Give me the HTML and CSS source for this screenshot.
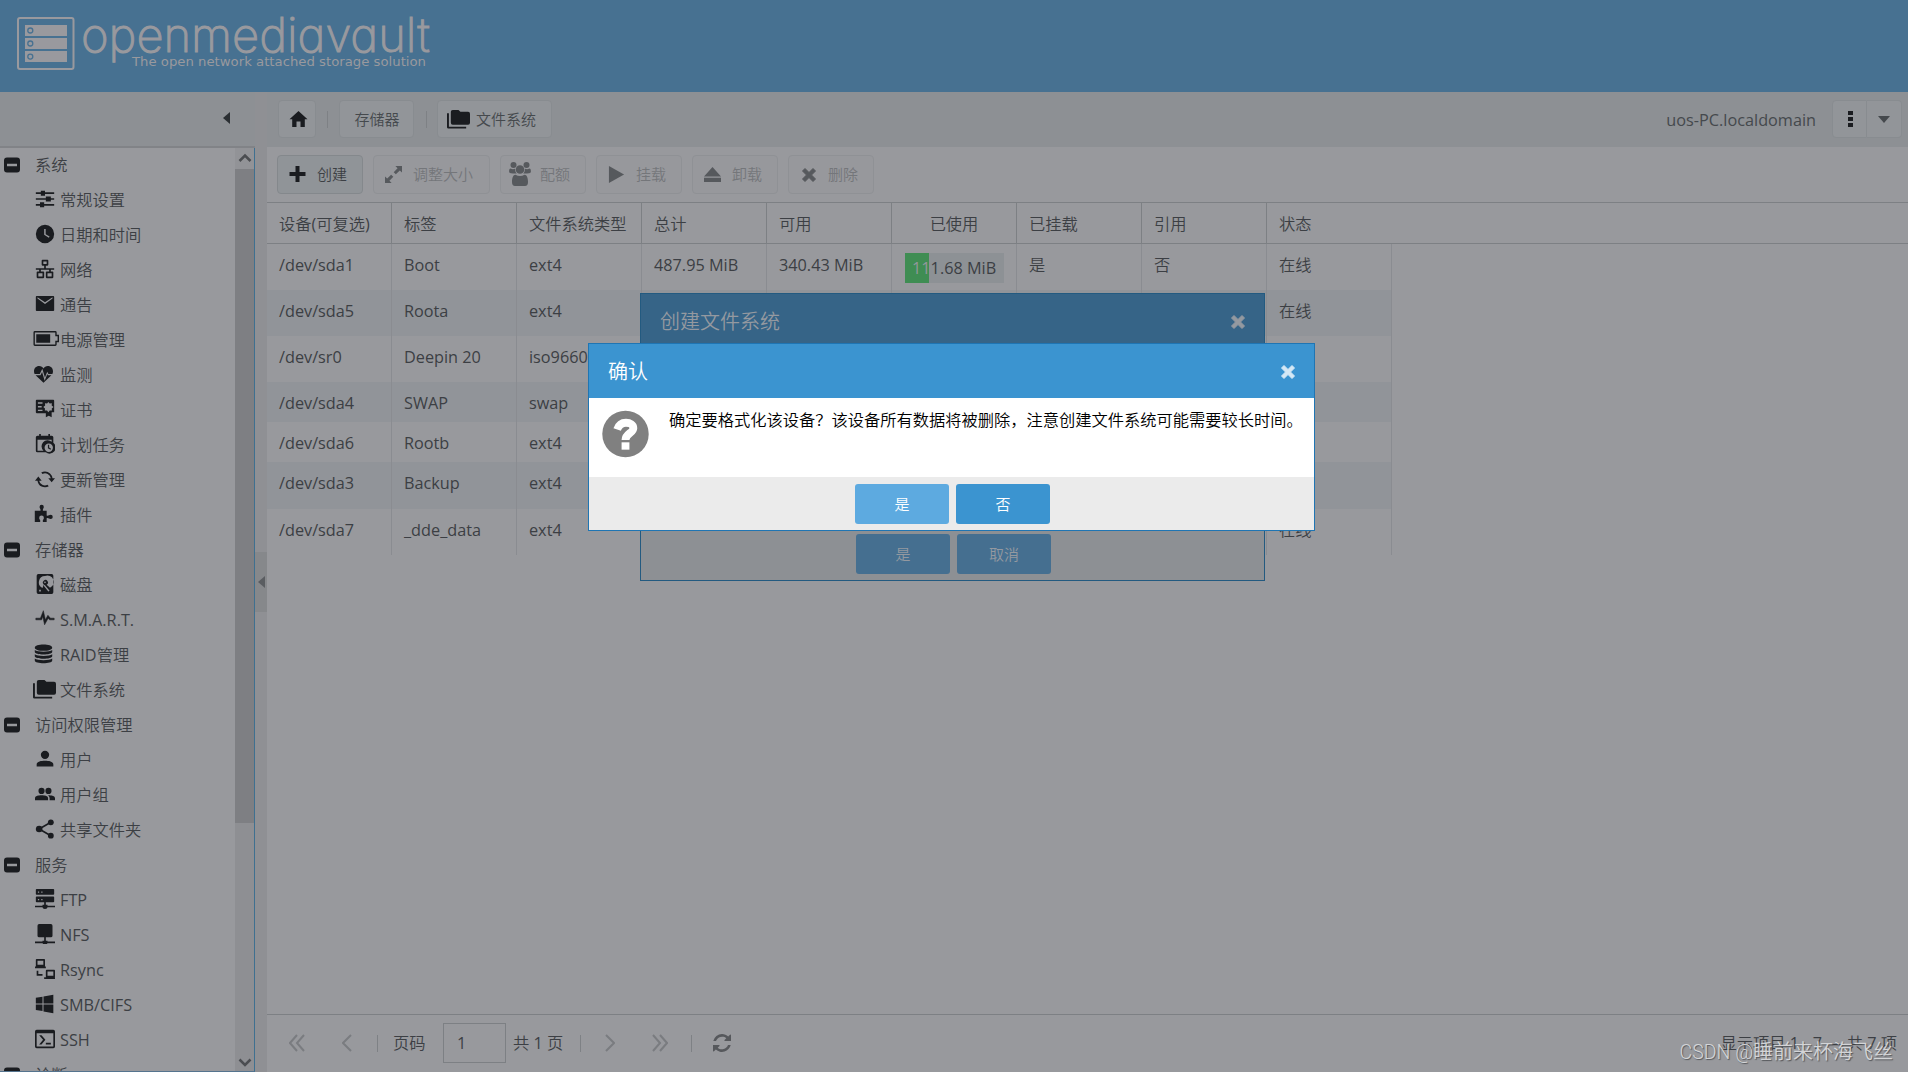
FILE: index.html
```html
<!DOCTYPE html>
<html lang="zh-CN">
<head>
<meta charset="utf-8">
<title>openmediavault</title>
<link rel="stylesheet" href="styles.css">
</head>
<body>
<svg class="defs" width="0" height="0">
  <symbol id="tune" viewBox="0 0 24 24"><path d="M1 4h6v2H1zm10 0h12v2H11zM7 2h5v6H7zM1 11h12v2H1zm17 0h5v2h-5zM13 9h6v6h-6zM1 18h5v2H1zm10 0h12v2H11zM6 16h5v6H6z"/></symbol>
  <symbol id="clock" viewBox="0 0 24 24"><path fill-rule="evenodd" d="M12 1a11 11 0 1 0 0 22 11 11 0 0 0 0-22zM11 6h1.800v6.200l4.700 2.800-.9 1.500L11 13z"/></symbol>
  <symbol id="lan" viewBox="0 0 24 24"><path fill-rule="evenodd" d="M9 1h6a1 1 0 0 1 1 1v5a1 1 0 0 1-1 1h-2v3h10v2h-4v2h2a1 1 0 0 1 1 1v6a1 1 0 0 1-1 1h-7a1 1 0 0 1-1-1v-6a1 1 0 0 1 1-1h3v-2H7v2h3a1 1 0 0 1 1 1v6a1 1 0 0 1-1 1H3a1 1 0 0 1-1-1v-6a1 1 0 0 1 1-1h2v-2H1v-2h10V8H9a1 1 0 0 1-1-1V2a1 1 0 0 1 1-1zm1 2v3h4V3zM4 17v4h5v-4zm11 0v4h5v-4z"/></symbol>
  <symbol id="mail" viewBox="0 0 24 24"><path fill-rule="evenodd" d="M2 2.500h20q1 0 1 1v16q0 1-1 1H2q-1 0-1-1v-16q0-1 1-1zM3 5.500l9 6.500 9-6.500V4l-9 6-9-6z"/></symbol>
  <symbol id="battery" viewBox="0 0 28 18"><path fill-rule="evenodd" d="M2 1h22q1.500 0 1.500 1.500V5H28v8h-2.500v2.500q0 1.500-1.500 1.500H2q-1.500 0-1.500-1.500v-13Q.500 1 2 1zm0 1.500v13h22v-4h2.500v-5H24v-4zM3.500 4.500h15v9h-15z"/></symbol>
  <symbol id="heart" viewBox="0 0 24 22"><path d="M6.500 1C9 1 11 2.300 12 4c1-1.700 3-3 5.500-3C21.500 1 24 4 24 7.500c0 1.200-.3 2.300-.8 3.500h-5L16.700 8l-2.900 7.500L10.500 4.500 7.300 11H.800A8 8 0 0 1 0 7.500C0 4 2.500 1 6.500 1zM2 12.500h6.200l2-4 3.300 11 3.300-8.500.7 1.500H22L12 22z"/></symbol>
  <symbol id="cert" viewBox="0 0 24 24"><path fill-rule="evenodd" d="M2 1h20q1 0 1 1v14h-3v6l-3.500-2-3.500 2v-5H2q-1 0-1-1V2q0-1 1-1zm1.500 3v1.800H9V4zm0 4.500v1.800H8V8.500zm0 4.500v1.500H9V13zM16 3.500l-1.500 2-2.500-.3.200 2.600L10 9.500l2 1.800-.2 2.500 2.600-.1L16 16l1.700-2.300 2.600.1-.2-2.500 2.100-1.800-2.200-1.700.2-2.600-2.600.3z"/></symbol>
  <symbol id="calendar" viewBox="0 0 24 24"><path fill-rule="evenodd" d="M5 0h2v2h9V0h2v2h2q2 0 2 2v6.500a7 7 0 1 1-9 11.500H3q-2 0-2-2V4q0-2 2-2h2zM3 7v13h7.200A7 7 0 0 1 20 9.300V7zm13.500 4.500a5 5 0 1 0 0 10 5 5 0 0 0 0-10zM15.500 13H17v3.200l2.300 1.500-.8 1.300-3-2z"/></symbol>
  <symbol id="renew" viewBox="0 0 24 24"><path d="M12 3a9 9 0 0 1 9 8h3l-4 5-4-5h3a7 7 0 0 0-10-5L7.500 4.200A9 9 0 0 1 12 3zM4 9l4 5H5a7 7 0 0 0 10 5l1.500 1.800A9 9 0 0 1 3 14H0z"/></symbol>
  <symbol id="puzzle" viewBox="0 0 24 24"><path d="M1 8h7c1-2-1-3-1-5a2.700 2.700 0 0 1 5.400 0c0 2-2 3-1 5H16v6c2 1 3-1 5-1a2.700 2.700 0 0 1 0 5.400c-2 0-3-2-5-1V22h-4.500c-1.500-2 1-3 1-5a3 3 0 0 0-6 0c0 2 2.500 3 1 5H1z"/></symbol>
  <symbol id="disk" viewBox="0 0 24 24"><path fill-rule="evenodd" d="M4 0h16q2 0 2 2v20q0 2-2 2H4q-2 0-2-2V2q0-2 2-2zm8 2.500a7.500 7.500 0 0 0-3 14.300l1.600-4.300a3 3 0 1 1 3.400.3l4 3.700A7.500 7.500 0 0 0 12 2.500zm0 6.500a1 1 0 1 0 0 2 1 1 0 0 0 0-2zm-.5 4l-1 1 5.500 7 1.500-1zM5 19v2h2v-2z"/></symbol>
  <symbol id="pulse" viewBox="0 0 24 24"><path d="M1 11h5.500L10 2l2.500 11 3-5.500 3 3.500H23v2h-5.500l-1.700-2-4.300 8L9.300 9 8 13H1z" stroke="currentColor" stroke-width=".6"/></symbol>
  <symbol id="database" viewBox="0 0 24 24"><path d="M12 0c6 0 11 1.500 11 4s-5 4-11 4S1 6.500 1 4s5-4 11-4zM1 7c3 2.800 19 2.800 22 0v2.500c0 4.200-22 4.200-22 0zm0 5.400c3 2.800 19 2.800 22 0v2.500c0 4.200-22 4.200-22 0zm0 5.400c3 2.800 19 2.800 22 0v2.500c0 4.600-22 4.600-22 0z"/></symbol>
  <symbol id="folders" viewBox="0 0 24 20"><path d="M6 .5h6l2 2h8q2 0 2 2V14q0 2-2 2H6q-2 0-2-2V2.500q0-2 2-2zM0 4h2v14h18v2H1.500Q0 20 0 18.500z"/></symbol>
  <symbol id="user" viewBox="0 0 24 24"><path d="M12 2a5 5 0 1 1 0 10 5 5 0 0 1 0-10zM2 21v-2.500C2 15 7 14 12 14s10 1 10 4.500V21z"/></symbol>
  <symbol id="users" viewBox="0 0 26 24"><path d="M8.500 4a4 4 0 1 1 0 8 4 4 0 0 1 0-8zm9 0a4 4 0 1 1 0 8 4 4 0 0 1 0-8zM0 20v-2.500C0 14.500 4 13.500 8.500 13.500s8.500 1 8.500 4V20zm19 0v-2.500c0-1.500-.7-2.800-2-3.900 5 0 9 1 9 3.900V20z"/></symbol>
  <symbol id="share" viewBox="0 0 24 24"><circle cx="5" cy="12" r="4"/><circle cx="19" cy="4" r="3.500"/><circle cx="19" cy="20" r="3.500"/><path d="M19 4L5 12l14 8" fill="none" stroke="currentColor" stroke-width="2"/></symbol>
  <symbol id="ftp" viewBox="0 0 24 24"><path fill-rule="evenodd" d="M2 0h20q1 0 1 1v5q0 1-1 1H2Q1 7 1 6V1q0-1 1-1zm0 9h20q1 0 1 1v5q0 1-1 1h-9v3h2v1h9v2h-9q0 2-3 2t-3-2H0v-2h9v-1h2v-3H2q-1 0-1-1v-5q0-1 1-1zM3.500 3v1.500H5V3zm4 0v1.500H9V3zm-4 9v1.500H5V12zm4 0v1.500H9V12z"/></symbol>
  <symbol id="nfs" viewBox="0 0 24 24"><path d="M5 0h14q2 0 2 2v12q0 2-2 2h-6v4h2v1h9v2h-9q0 1-3 1t-3-1H0v-2h9v-1h2v-4H5q-2 0-2-2V2q0-2 2-2z"/></symbol>
  <symbol id="rsync" viewBox="0 0 24 24"><path fill-rule="evenodd" d="M2 0h9q1 0 1 1v7q0 1-.5 1H13v2H0V9h1.500Q1 9 1 8V1q0-1 1-1zm1 2v5h7V2zM2 14h2v4h5v2H2zm12-1h9q1 0 1 1v7q0 1-.5 1h.5v2H11v-2h2.500q-.5 0-.5-1v-7q0-1 1-1zm1 2v5h7v-5z"/></symbol>
  <symbol id="windows" viewBox="0 0 24 24"><path d="M1 4.500l8-1.200v8H1zM10.200 3L22 1v10.300H10.200zM1 12.500h8v8l-8-1.200zm9.200 0H22V23l-11.800-2z"/></symbol>
  <symbol id="ssh" viewBox="0 0 24 24"><path fill-rule="evenodd" d="M2 1h20q2 0 2 2v18q0 2-2 2H2q-2 0-2-2V3q0-2 2-2zm0 4v16h20V5zm3 2.500h2.800L12.500 13l-4.700 5.500H5L9.700 13zM13 16.500h6v2h-6z"/></symbol>
  <symbol id="minus" viewBox="0 0 16 16"><path fill-rule="evenodd" d="M3 .5h10q3 0 3 3v9q0 3-3 3H3q-3 0-3-3v-9q0-3 3-3zM3 6.700v2.600h10V6.700z"/></symbol>
  <symbol id="home" viewBox="0 0 18 16"><path d="M9 0l9 8.300h-2.700V16h-4.300v-5.500H7V16H2.700V8.300H0z"/></symbol>
  <symbol id="plus" viewBox="0 0 16 16"><path d="M6 0h4v6h6v4h-6v6H6v-6H0V6h6z"/></symbol>
  <symbol id="expand" viewBox="0 0 18 18"><path d="M11 0h7v7l-2.300-2.300-4.200 4.100-2.300-2.300 4.100-4.200zM6.500 9.200l2.300 2.300-4.100 4.200L7 18H0v-7l2.300 2.300z"/></symbol>
  <symbol id="group" viewBox="0 0 22 24"><circle cx="4.500" cy="3" r="3"/><circle cx="17.500" cy="3" r="3"/><circle cx="11" cy="7.500" r="4.300"/><path d="M1.500 6.500c2 1 3 .7 4.500.3.200 2.500.7 3.700 1.800 4.700H4C1 11.500 0 10.500.1 9.500c0-2 .5-3 1.400-3zm19 0c-2 1-3 .7-4.500.3-.2 2.500-.7 3.700-1.800 4.700H18c3 0 4-1 3.900-2 0-2-.5-3-1.400-3zM6.500 12.700c2.800 1.600 6.200 1.600 9 0 2.500 0 3.500 3.300 3.500 7.300q0 4-3 4H6q-3 0-3-4c0-4 1-7.300 3.500-7.300z"/></symbol>
  <symbol id="play" viewBox="0 0 16 18"><path d="M0 0l16 9-16 9z"/></symbol>
  <symbol id="eject" viewBox="0 0 18 16"><path d="M9 0l9 10H0zM0 11.500h18V16H0z"/></symbol>
  <symbol id="cross" viewBox="0 0 14 14"><path d="M3 .5L7 4.500l4-4L13.500 3l-4 4 4 4-2.500 2.500-4-4-4 4L.5 11l4-4-4-4z" stroke="currentColor" stroke-linejoin="round"/></symbol>
  <symbol id="refresh" viewBox="0 0 18 18"><path d="M9 0c2.400 0 4.600 1 6.200 2.500L17 .7q1-.5 1 .500V7h-6q-1 0-.5-1l1.800-1.700A6.400 6.400 0 0 0 3 7H.300A9 9 0 0 1 9 0zM0 11h6q1 0 .5 1l-1.800 1.700A6.400 6.400 0 0 0 15 11h2.700A9 9 0 0 1 2.800 15.500L1 17.300q-1 .5-1-.5z"/></symbol>
</svg>

<div class="app">
  <header class="banner">
    <svg class="logo" width="440" height="92" viewBox="0 0 440 92">
      <rect x="18" y="18" width="55.500" height="51" rx="2" fill="none" stroke="currentColor" stroke-width="2"/>
      <path d="M25 25h42v11H25zM25 38h42v11H25zM25 51h42v11H25z" fill="currentColor"/>
      <g class="leds"><circle cx="30.300" cy="30.500" r="2.500"/><circle cx="30.300" cy="43.500" r="2.500"/><circle cx="30.300" cy="56.600" r="2.500"/></g>
      <text class="brand" x="81" y="52" textLength="349" lengthAdjust="spacingAndGlyphs">openmediavault</text>
      <text class="tagline" x="132" y="66" textLength="294" lengthAdjust="spacingAndGlyphs">The open network attached storage solution</text>
    </svg>
  </header>

  <div class="workspace">
    <aside class="sidebar">
      <div class="side-head"><i class="tri-left"></i></div>
      <div class="side-body">
        <ul class="tree">
          <li class="grp"><svg><use href="#minus"/></svg>系统</li>
          <li><svg><use href="#tune"/></svg>常规设置</li>
          <li><svg><use href="#clock"/></svg>日期和时间</li>
          <li><svg><use href="#lan"/></svg>网络</li>
          <li><svg><use href="#mail"/></svg>通告</li>
          <li><svg class="wide"><use href="#battery"/></svg>电源管理</li>
          <li><svg class="left"><use href="#heart"/></svg>监测</li>
          <li><svg><use href="#cert"/></svg>证书</li>
          <li><svg><use href="#calendar"/></svg>计划任务</li>
          <li><svg><use href="#renew"/></svg>更新管理</li>
          <li><svg class="left"><use href="#puzzle"/></svg>插件</li>
          <li class="grp"><svg><use href="#minus"/></svg>存储器</li>
          <li><svg><use href="#disk"/></svg>磁盘</li>
          <li><svg><use href="#pulse"/></svg>S.M.A.R.T.</li>
          <li><svg class="left"><use href="#database"/></svg>RAID管理</li>
          <li><svg class="folder"><use href="#folders"/></svg>文件系统</li>
          <li class="grp"><svg><use href="#minus"/></svg>访问权限管理</li>
          <li><svg><use href="#user"/></svg>用户</li>
          <li><svg><use href="#users"/></svg>用户组</li>
          <li><svg><use href="#share"/></svg>共享文件夹</li>
          <li class="grp"><svg><use href="#minus"/></svg>服务</li>
          <li><svg><use href="#ftp"/></svg>FTP</li>
          <li><svg><use href="#nfs"/></svg>NFS</li>
          <li><svg><use href="#rsync"/></svg>Rsync</li>
          <li><svg><use href="#windows"/></svg>SMB/CIFS</li>
          <li><svg><use href="#ssh"/></svg>SSH</li>
          <li class="grp"><svg><use href="#minus"/></svg>诊断</li>
        </ul>
        <div class="scrollbar">
          <svg viewBox="0 0 19 21"><path d="M4.500 13L10 7.500l5.500 5.500"/></svg>
          <div class="thumb"></div>
          <svg class="down" viewBox="0 0 19 21"><path d="M4.500 9.500L10 15l5.500-5.500"/></svg>
        </div>
      </div>
    </aside>
    <div class="splitter"><div class="grip"><i class="tri-left"></i></div></div>

    <main class="main">
      <nav class="crumbs">
        <button class="crumb home"><svg><use href="#home"/></svg></button>
        <i class="sep"></i>
        <button class="crumb store">存储器</button>
        <i class="sep"></i>
        <button class="crumb files"><svg><use href="#folders"/></svg>文件系统</button>
        <span class="host">uos-PC.localdomain</span>
        <div class="split"><button><i class="dots"></i></button><button><i class="tri-down"></i></button></div>
      </nav>
      <div class="toolbar">
        <button class="tool on"><svg><use href="#plus"/></svg><span>创建</span></button>
        <button class="tool long"><svg><use href="#expand"/></svg><span>调整大小</span></button>
        <button class="tool quota"><svg><use href="#group"/></svg><span>配额</span></button>
        <button class="tool"><svg><use href="#play"/></svg><span>挂载</span></button>
        <button class="tool"><svg><use href="#eject"/></svg><span>卸载</span></button>
        <button class="tool del"><svg><use href="#cross"/></svg><span>删除</span></button>
      </div>
      <div class="grid">
        <div class="row head"><span>设备(可复选)</span><span>标签</span><span>文件系统类型</span><span>总计</span><span>可用</span><span class="mid">已使用</span><span>已挂载</span><span>引用</span><span>状态</span></div>
        <div class="row tall"><span>/dev/sda1</span><span>Boot</span><span>ext4</span><span>487.95 MiB</span><span>340.43 MiB</span><span class="use"><span class="meter"><b></b><em><u>11</u>1.68 MiB</em></span></span><span>是</span><span>否</span><span>在线</span></div>
        <div class="row tall alt"><span>/dev/sda5</span><span>Roota</span><span>ext4</span><span></span><span></span><span></span><span></span><span></span><span>在线</span></div>
        <div class="row tall"><span>/dev/sr0</span><span>Deepin 20</span><span>iso9660</span><span></span><span></span><span></span><span></span><span></span><span></span></div>
        <div class="row alt"><span>/dev/sda4</span><span>SWAP</span><span>swap</span><span></span><span></span><span></span><span></span><span></span><span></span></div>
        <div class="row"><span>/dev/sda6</span><span>Rootb</span><span>ext4</span><span></span><span></span><span></span><span></span><span></span><span></span></div>
        <div class="row taller alt"><span>/dev/sda3</span><span>Backup</span><span>ext4</span><span></span><span></span><span></span><span></span><span></span><span></span></div>
        <div class="row tall"><span>/dev/sda7</span><span>_dde_data</span><span>ext4</span><span></span><span></span><span></span><span></span><span></span><span>在线</span></div>
      </div>
      <footer class="pager">
        <svg class="first" viewBox="0 0 16 18"><path d="M8 1L1 9l7 8M15 1L8 9l7 8"/></svg>
        <svg class="prev" viewBox="0 0 10 18"><path d="M9 1L1 9l8 8"/></svg>
        <i class="sep"></i>
        <span class="label">页码</span>
        <input value="1">
        <span class="total">共 1 页</span>
        <i class="sep"></i>
        <svg class="next" viewBox="0 0 10 18"><path d="M1 1l8 8-8 8"/></svg>
        <svg class="last" viewBox="0 0 16 18"><path d="M1 1l7 8-7 8M8 1l7 8-7 8"/></svg>
        <i class="sep"></i>
        <svg class="reload"><use href="#refresh"/></svg>
        <span class="status">显示项目 1 - 7 — 共 7 项</span>
      </footer>
    </main>
  </div>
</div>

<section class="dialog create">
  <div class="title">创建文件系统<svg><use href="#cross"/></svg></div>
  <div class="actions"><button>是</button><button>取消</button></div>
</section>
<section class="dialog confirm">
  <div class="title">确认<svg><use href="#cross"/></svg></div>
  <div class="content">
    <svg viewBox="0 0 48 48"><circle cx="24" cy="24" r="23.700" fill="#808080"/><path d="M15.500 19.500C17 15 20 12.500 24.500 12.500c4.200 0 7.500 2 7.500 5.500 0 5-8 5.500-8 12" fill="none" stroke="#fff" stroke-width="8"/><path d="M20 32.500h8V40h-8z" fill="#fff"/></svg>
    <p>确定要格式化该设备？该设备所有数据将被删除，注意创建文件系统可能需要较长时间。</p>
  </div>
  <div class="actions"><button class="yes">是</button><button>否</button></div>
</section>
<div class="credit"><span>CSDN @</span>睡前来杯海飞丝</div>
</body>
</html>
```
FILE: styles.css
```css
* { box-sizing: border-box; }
body {
  margin: 0;
  width: 1908px;
  height: 1072px;
  overflow: hidden;
  position: relative;
  background: #98999d;
  color: #3c3f44;
  font: 400 16.25px/24px "Open Sans", "Noto Sans CJK SC DemiLight", "Noto Sans CJK SC Light", "Noto Sans CJK SC", sans-serif;
}
button, input { font: inherit; color: inherit; margin: 0; padding: 0; border: 1px solid #888c90; border-radius: 4px; background: #929599; }
svg { display: block; fill: currentColor; flex: none; }
.defs { position: absolute; }

.app { display: flex; flex-direction: column; height: 1072px; }
.banner { height: 92px; flex: none; background: #477191; color: #99999e; }
.brand { font: 200 48px "Inter", sans-serif; font-feature-settings: "cv11"; fill: currentColor; stroke: currentColor; stroke-width: 1px; }
.tagline { font: 13px "DejaVu Sans", sans-serif; fill: currentColor; }
.leds { fill: none; stroke: #477191; stroke-width: 1.300px; }

.workspace { display: flex; flex: 1; min-height: 0; }
.sidebar { width: 255px; display: flex; flex-direction: column; }
.side-head { height: 56px; flex: none; background: #8d9094; border-bottom: 2px solid #818387; display: flex; align-items: center; padding: 0 0 2px 223px; }
.tri-left { width: 0; height: 0; border: 6px solid transparent; border-right: 7px solid #2b2f33; border-left: 0; }
.side-body { flex: 1; min-height: 0; display: flex; border-right: 1px solid #3f7090; border-bottom: 1px solid #55748e; overflow: hidden; }
.tree { list-style: none; margin: 0; padding: 0; width: 235px; flex: none; }
.tree li { height: 34.98px; display: flex; align-items: center; padding-left: 34px; line-height: 35px; padding-top: 1px; }
.tree svg { width: 20px; height: 20px; margin: 0 5px 3px 1px; color: #1a1c20; }
.tree svg.left { width: 19px; margin: 0 7px 3px 0; }
.tree svg.wide { width: 26px; height: 17px; margin: 0 1px 4px -1px; }
.tree svg.folder { width: 23px; height: 20px; margin: 0 4px 3px -1px; }
.tree .grp { padding-left: 4px; }
.tree .grp svg { width: 16px; height: 16px; margin: 0 15px 1px 0; }
.scrollbar { width: 19px; display: flex; flex-direction: column; background: #8e8f93; }
.scrollbar svg { width: 19px; height: 21px; background: #929397; fill: none; stroke: #4b4d51; stroke-width: 2.500; }
.scrollbar .down { margin-top: auto; background: none; }
.thumb { height: 654px; background: #7e7f83; }
.splitter { width: 12px; background: #8f9094; padding-top: 460px; }
.grip { height: 60px; display: flex; align-items: center; padding-left: 3px; background: #86888b; }
.grip .tri-left { border-right-color: #5a5d61; }

.main { flex: 1; min-width: 0; display: flex; flex-direction: column; }
.crumbs { height: 55px; flex: none; background: #8d9094; display: flex; align-items: center; padding: 0 6px 0 11px; color: #45494d; }
.crumb { height: 38px; margin-bottom: 1px; font-size: 15px; display: flex; align-items: center; justify-content: center; }
.home { width: 38px; margin-right: 11px; padding-left: 2px; }
.home svg { width: 19px; height: 16px; color: #1a1c20; }
.sep { width: 1px; height: 17px; background: #7e8185; flex: none; }
.store { width: 75px; margin: 0 12px 1px 11px; padding-left: 1px; }
.files { width: 115px; margin-left: 10px; justify-content: flex-start; padding-left: 9px; }
.files svg { width: 23px; height: 20px; margin-right: 6px; color: #1a1c20; }
.host { margin: 0 16px 0 auto; }
.split { display: flex; height: 38px; margin-bottom: 1px; }
.split button { width: 35px; display: grid; place-items: center; }
.split button:first-child { border-radius: 4px 0 0 4px; padding-left: 1px; }
.split button:last-child { border-radius: 0 4px 4px 0; border-left: 0; }
.dots { width: 5px; height: 17px; background: repeating-linear-gradient(#1a1c20 0 4px, transparent 4px 6px); }
.tri-down { border: 6px solid transparent; border-top: 7px solid #45494d; border-bottom: 0; }

.toolbar { height: 55px; flex: none; display: flex; gap: 10px; padding: 8px 10px; }
.tool { width: 86px; height: 39px; display: flex; align-items: center; padding: 0 0 1px 11px; font-size: 15px; color: #74767a; background: #97989c; border-color: #8f9195; }
.tool.on { color: #3c3f44; background: #909498; border-color: #84888c; }
.tool svg { width: 17px; height: 17px; color: #56595d; margin-right: 11px; }
.tool.on svg { color: #1a1c20; height: 16px; }
.long { width: 117px; }
.quota { padding-left: 8px; }
.tool.quota svg { width: 22px; height: 24px; margin-right: 9px; }
.tool.del svg { width: 14px; height: 14px; margin: 2px 12px 0 2px; }

.grid { flex: 1; border-top: 1px solid #7d8084; }
.row { display: grid; grid-template-columns: repeat(9, 125px); height: 40px; width: 1125px; }
.row > span { padding: 9px 0 0 12px; border-right: 1px solid #8a8c91; line-height: 24px; white-space: nowrap; }
.tall { height: 46px; }
.taller { height: 47px; }
.alt { background: #919499; }
.head { height: 41px; width: auto; border-bottom: 1px solid #7d8084; }
.head > span { border-color: #7d8084; }
.head > span:last-child { border: 0; }
.head .mid { padding-left: 0; text-align: center; }
.row > .use { padding: 9px 12px 0 13px; }
.meter { display: block; position: relative; height: 30px; background: #8d9195; overflow: hidden; }
.meter b { display: block; width: 24%; height: 30px; background: #3f8d53; }
.meter em { position: absolute; left: 7px; top: 3px; font-style: normal; }
.meter u { color: #92979b; text-decoration: none; }

.pager { height: 58px; flex: none; border-top: 1px solid #7d8084; display: flex; align-items: center; padding: 0 11px 1px 22px; }
.pager > svg { height: 18px; fill: none; stroke: #7a7c80; stroke-width: 2; }
.first, .last { width: 16px; }
.prev, .next { width: 10px; }
.prev { margin: 0 25px 0 37px; }
.label { width: 33px; margin: 0 17px 0 15px; white-space: nowrap; }
.pager input { width: 63px; height: 40px; border-color: #7d8084; border-radius: 0; background: none; padding-left: 13px; }
.total { width: 52px; margin: 0 15px 0 7px; white-space: nowrap; }
.next { margin: 0 37px 0 24px; }
.last { margin-right: 23px; }
.pager > .reload { width: 18px; fill: #56585c; stroke: none; margin-left: 21px; }
.status { margin-left: auto; }

.dialog { position: absolute; display: flex; flex-direction: column; border: 1px solid #1f75b3; }
.dialog .title { display: flex; justify-content: space-between; align-items: center; padding: 0 19px; font-size: 20px; }
.title svg { width: 14px; height: 14px; }
.actions { display: flex; justify-content: center; gap: 7px; }
.actions button { width: 94px; height: 40px; border: 0; border-radius: 3px; font-size: 15px; }
.create { left: 640px; top: 293px; width: 625px; height: 288px; background: #8d9094; border-color: #235a80; justify-content: space-between; }
.create .title { height: 56px; background: #366487; color: #9499a0; }
.create .actions { padding-bottom: 6px; padding-left: 2px; }
.create button { background: #456f90; color: #9499a0; }
.confirm { left: 588px; top: 343px; width: 727px; height: 188px; background: #ebebeb; }
.confirm .title { height: 54px; background: #3b94d0; color: #fff; padding-top: 1px; }
.confirm .title svg { color: #d5e8f5; }
.content { height: 79px; background: #fff; display: flex; padding: 12px 0 0 13px; color: #000; }
.content svg { width: 47px; height: 48px; }
.content p { margin: -2px 0 0 20px; white-space: nowrap; }
.confirm .actions { padding: 7px 0 0 2px; }
.confirm button { background: #3b94d0; color: #fff; }
.confirm .yes { background: #5daae0; }
.credit { position: absolute; right: 15px; top: 1037px; font: 400 20px/28px "Noto Sans CJK SC DemiLight", "Noto Sans CJK SC", sans-serif; color: #d4d5d7; text-shadow: 1px 1px 1px #55575b; white-space: nowrap; }
.credit span { font: 300 19.500px/28px Roboto, sans-serif; }
```
